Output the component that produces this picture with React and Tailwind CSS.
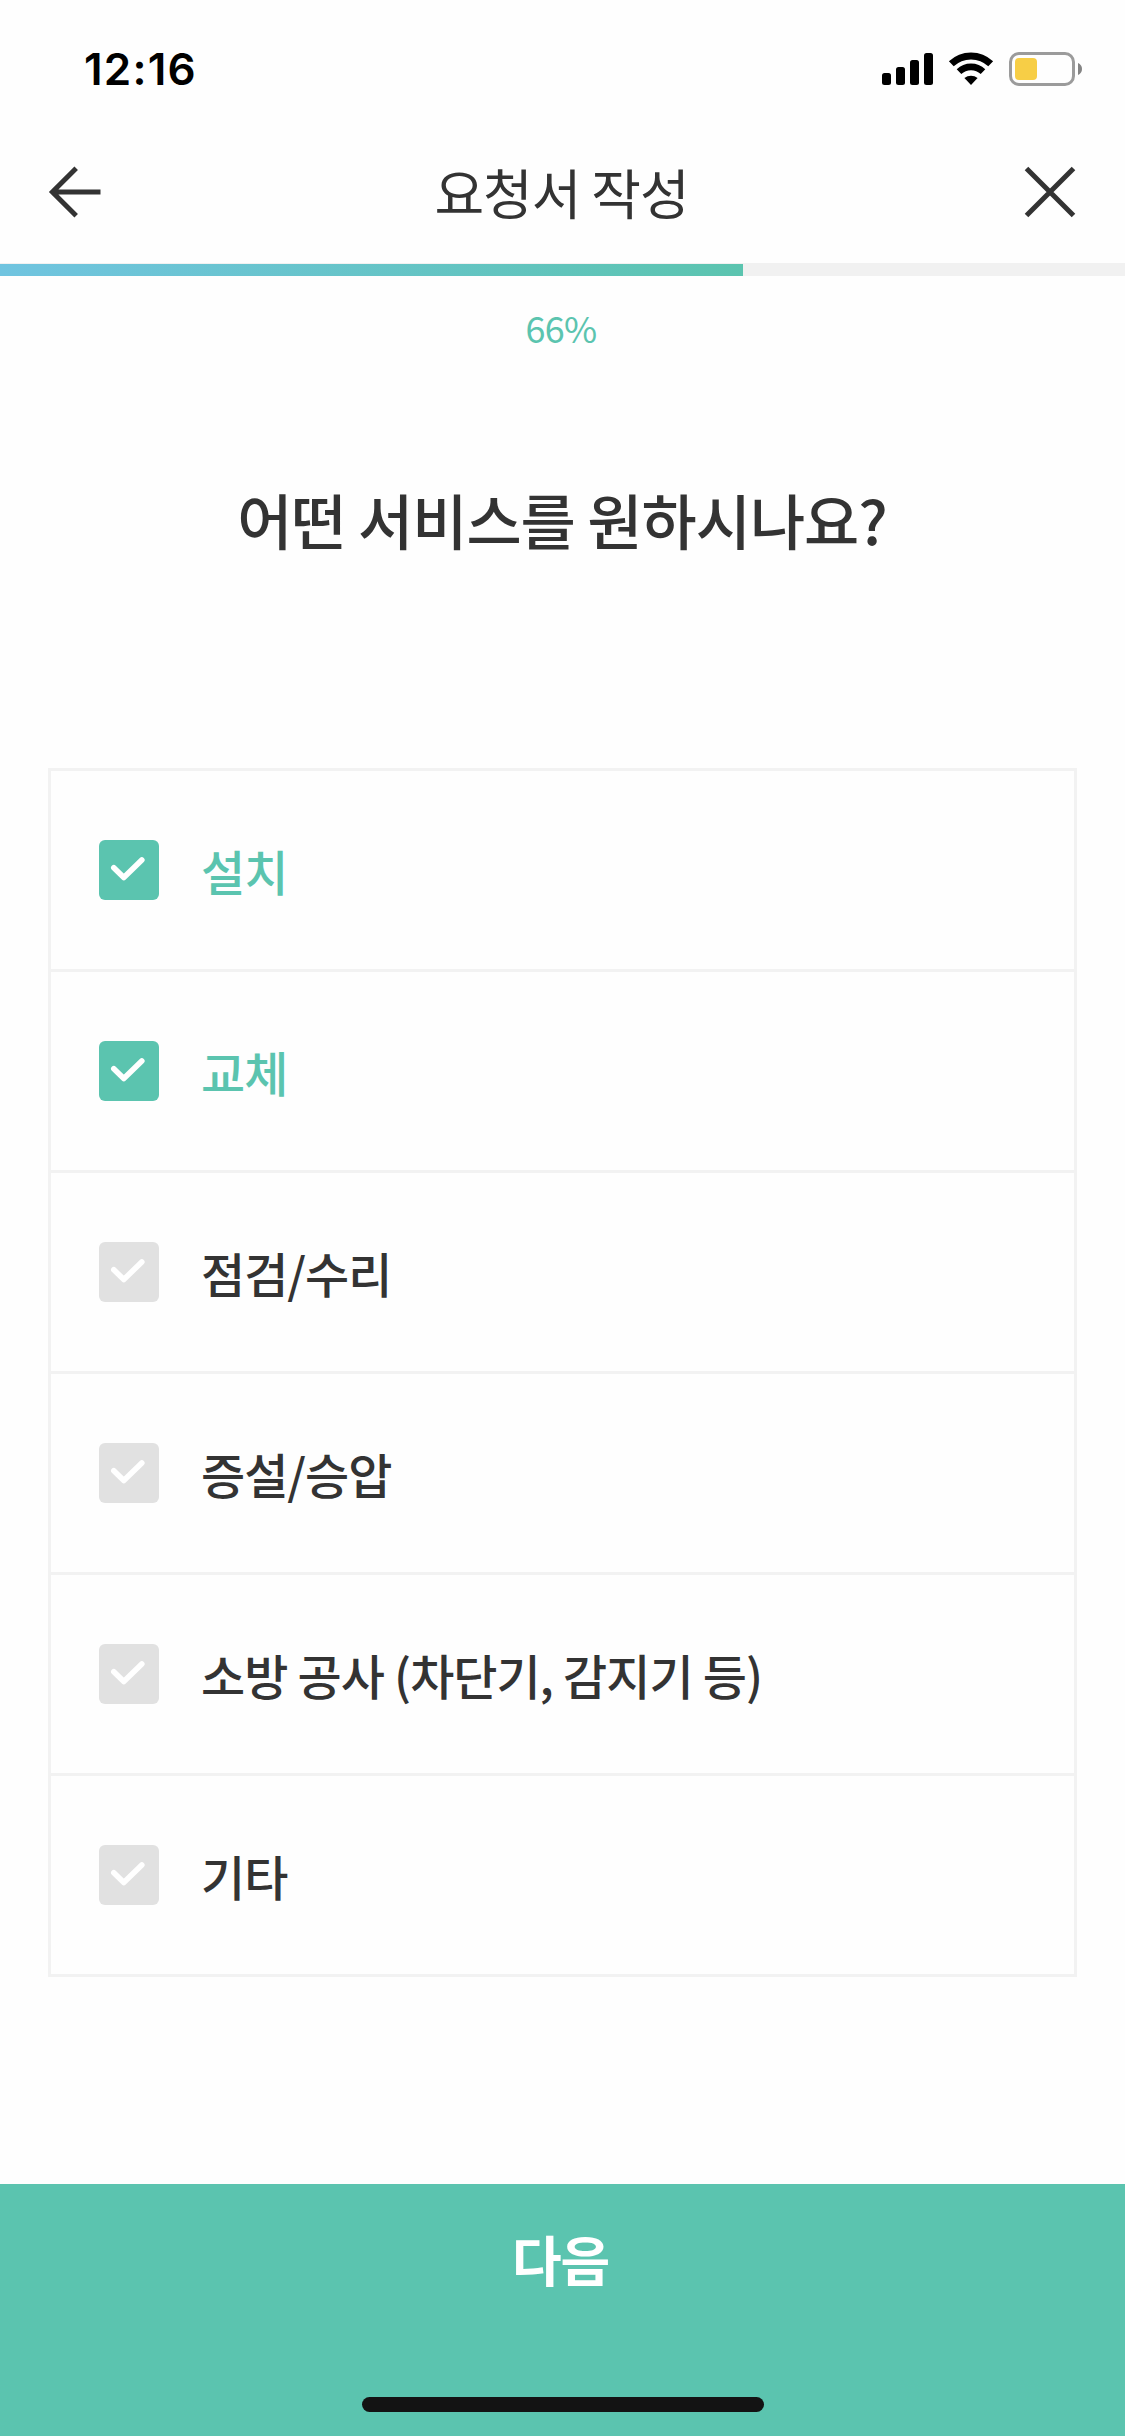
import { useState } from 'react';

const OPTIONS = [
  '설치',
  '교체',
  '점검/수리',
  '증설/승압',
  '소방 공사 (차단기, 감지기 등)',
  '기타',
];

function StatusBar() {
  return (
    <div className="flex h-[132px] justify-between pl-[84px] pr-[42px] pt-[42px] text-black">
      <span className="font-['Inter',sans-serif] text-[44px] font-semibold leading-[54px] tracking-[1.2px]">12:16</span>

      {/* signal, wifi, battery */}
      <svg className="mt-[7px]" width="202" height="40" viewBox="881 49 202 40" fill="none">
        <g fill="#000">
          <rect x="882" y="73" width="9" height="12" rx="2.5" />
          <rect x="896" y="67" width="9" height="18" rx="2.5" />
          <rect x="910" y="60" width="9" height="25" rx="2.5" />
          <rect x="924" y="53" width="9" height="32" rx="2.5" />
        </g>
        <path d="M951.3 63.8a28.5 28.5 0 0 1 39.4 0" stroke="#000" strokeWidth="7" />
        <path d="M959 71.7a17.3 17.3 0 0 1 24 0" stroke="#000" strokeWidth="6.6" />
        <path d="M964.4 78.1a10.2 10.2 0 0 1 13.2 0L971 85z" fill="#000" />
        <rect x="1010.5" y="53.5" width="63" height="31" rx="8.5" stroke="#9b9b9b" strokeWidth="3" />
        <rect x="1015" y="58" width="22" height="22" rx="4" fill="#f7ce46" />
        <path d="M1078 63c2.600 1 4 3.400 4 6s-1.400 5-4 6z" fill="#848484" />
      </svg>
    </div>
  );
}

function Header() {
  return (
    <header className="flex h-[131px] items-start justify-between px-[48px] text-[#333]">
      <button className="mt-[33px]">
        <svg width="54" height="54" viewBox="48 165 54 54" fill="none" stroke="currentColor" strokeWidth="5">
          <path d="M76.200 168.200 52.400 192l23.800 23.800M53 192h47.500" />
        </svg>
      </button>
      <h1 className="mt-5 pr-[2px] text-[54px] leading-[80px] tracking-[-0.02em]">요청서 작성</h1>
      <button className="mt-[33px]">
        <svg width="54" height="54" viewBox="1023 165 54 54" fill="none" stroke="currentColor" strokeWidth="5">
          <path d="m1026.500 168.500 47 47m0-47-47 47" />
        </svg>
      </button>
    </header>
  );
}

function Progress({ value }) {
  return (
    <div>
      <div className="h-[13px] bg-[#f1f1f1] pt-px">
        <div
          className="h-3 bg-linear-to-r from-[#70c4e0] to-[#5bc4af]"
          style={{ width: `${value}%` }}
        />
      </div>
      <p className="mt-6 pr-[3px] text-center text-[36px] leading-[54px] tracking-[-0.02em] text-[#5bc4af]">
        {value}%
      </p>
    </div>
  );
}

function Option({ label, checked, onToggle }) {
  return (
    <li>
      <button
        onClick={onToggle}
        className={`flex h-[198px] w-full items-center pl-[48px] text-left ${
          checked ? 'text-[#5bc4af]' : 'text-[#333]'
        }`}
      >
        <span className={`size-[60px] rounded-[6px] ${checked ? 'bg-[#5bc4af]' : 'bg-[#e1e1e1]'}`}>
          <svg viewBox="0 0 60 60" fill="none" stroke="#fff" strokeWidth="5.600" strokeLinecap="round" strokeLinejoin="round">
            <path d="M14.800 27.800 24.800 37.600 42.800 19.900" />
          </svg>
        </span>
        <span className="ml-[42px] text-[48px] font-medium leading-[72px] tracking-[-1px] [word-spacing:0.4px]">
          {label}
        </span>
      </button>
    </li>
  );
}

export default function App() {
  const [selected, setSelected] = useState([0, 1]);

  const toggle = (idx) => {
    setSelected((prev) => (prev.includes(idx) ? prev.filter((i) => i !== idx) : [...prev, idx]));
  };

  return (
    <div className="flex h-[2436px] w-[1125px] flex-col bg-[#fefefe] font-['Noto_Sans_CJK_KR',sans-serif]">
      <StatusBar />
      <Header />
      <Progress value={66} />

      <main className="flex-1">
        <h2 className="mt-[120px] pr-px text-center text-[60px] font-medium leading-[90px] tracking-[-1px] text-[#333]">
          어떤 서비스를 원하시나요?
        </h2>

        <ul className="mx-[48px] mt-[204px] divide-y-[3px] divide-[#f2f2f2] border-[3px] border-[#f2f2f2]">
          {OPTIONS.map((label, idx) => (
            <Option
              key={label}
              label={label}
              checked={selected.includes(idx)}
              onToggle={() => toggle(idx)}
            />
          ))}
        </ul>
      </main>

      {/* Next button runs under the home indicator */}
      <button className="flex h-[252px] flex-col items-center justify-between bg-[#5bc4af] pb-6 pt-[35px]">
        <span className="pr-1 text-[54px] font-bold leading-[80px] tracking-[-0.02em] text-white">다음</span>
        <span className="h-[15px] w-[402px] rounded-full bg-[#131313]" />
      </button>
    </div>
  );
}
